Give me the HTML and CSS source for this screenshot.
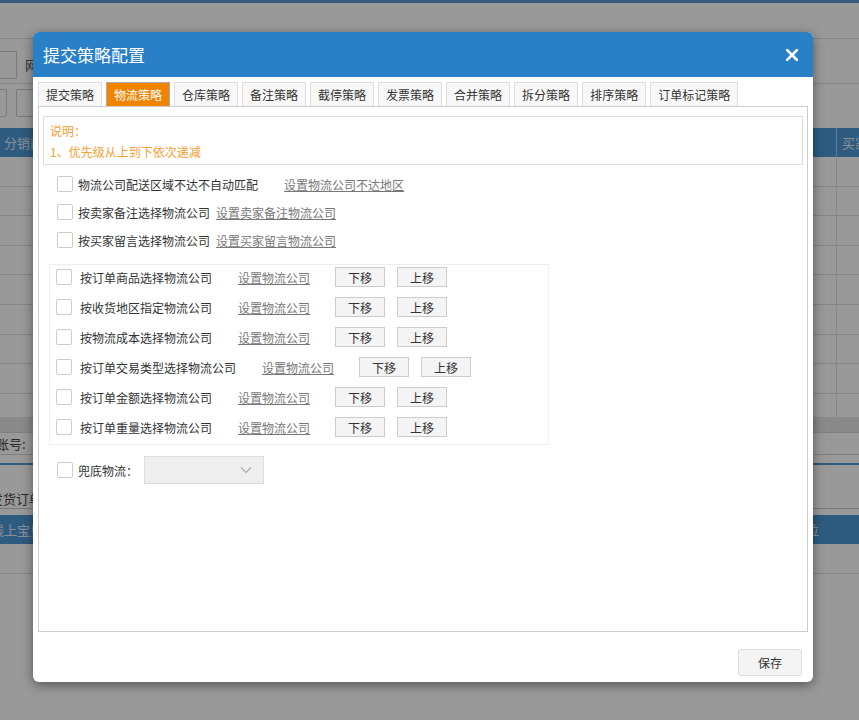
FILE: index.html
```html
<!DOCTYPE html>
<html lang="zh-CN">
<head>
<meta charset="utf-8">
<title>提交策略配置</title>
<link rel="stylesheet" href="styles.css">
</head>
<body>
<div class="page">
  <div class="pg-top"></div>
  <div class="pg-nav"></div>
  <div class="pg-search"><span class="pg-input"></span><span class="pg-label">网店</span></div>
  <div class="pg-tools"><span class="pg-btn"></span><span class="pg-btn pg-btn-icon"></span></div>
  <div class="pg-thead"><span class="pg-th">分销商</span><span class="pg-th-right">买家</span></div>
  <div class="pg-tbody">
    <div class="pg-tr"></div><div class="pg-tr"></div><div class="pg-tr"></div>
    <div class="pg-tr"></div><div class="pg-tr"></div><div class="pg-tr"></div>
    <div class="pg-tr"></div><div class="pg-tr"></div><div class="pg-tr pg-tr-last"></div>
  </div>
  <div class="pg-band"></div>
  <div class="pg-acct">账号:</div>
  <div class="pg-blue-line"></div>
  <div class="pg-orders">发货订单</div>
  <div class="pg-thead2"><span class="pg-th2">线上宝贝名称</span><span class="pg-th2-right">单位</span></div>
  <div class="pg-row4"></div>
</div>
<div class="mask"></div>
<div class="modal">
  <div class="modal-header">
    <span class="modal-title">提交策略配置</span>
    <span class="modal-close"><svg width="12" height="12" viewBox="0 0 12 12"><path d="M1 1L11 11M11 1L1 11" stroke="#fff" stroke-width="2.6" stroke-linecap="square"/></svg></span>
  </div>
  <div class="modal-body">
    <div class="tabs">
      <span class="tab">提交策略</span>
      <span class="tab tab-active">物流策略</span>
      <span class="tab">仓库策略</span>
      <span class="tab">备注策略</span>
      <span class="tab">截停策略</span>
      <span class="tab">发票策略</span>
      <span class="tab">合并策略</span>
      <span class="tab">拆分策略</span>
      <span class="tab">排序策略</span>
      <span class="tab">订单标记策略</span>
    </div>
    <div class="panel">
      <div class="note">
        <div>说明：</div>
        <div>1、优先级从上到下依次递减</div>
      </div>
      <div class="opt"><input type="checkbox" class="cb"><span class="opt-label">物流公司配送区域不达不自动匹配</span><a class="link link-far">设置物流公司不达地区</a></div>
      <div class="opt"><input type="checkbox" class="cb"><span class="opt-label">按卖家备注选择物流公司</span><a class="link">设置卖家备注物流公司</a></div>
      <div class="opt"><input type="checkbox" class="cb"><span class="opt-label">按买家留言选择物流公司</span><a class="link">设置买家留言物流公司</a></div>
      <div class="group">
        <div class="grow"><input type="checkbox" class="cb"><span class="grow-label">按订单商品选择物流公司</span><a class="link link-far">设置物流公司</a><button class="mv">下移</button><button class="mv">上移</button></div>
        <div class="grow"><input type="checkbox" class="cb"><span class="grow-label">按收货地区指定物流公司</span><a class="link link-far">设置物流公司</a><button class="mv">下移</button><button class="mv">上移</button></div>
        <div class="grow"><input type="checkbox" class="cb"><span class="grow-label">按物流成本选择物流公司</span><a class="link link-far">设置物流公司</a><button class="mv">下移</button><button class="mv">上移</button></div>
        <div class="grow"><input type="checkbox" class="cb"><span class="grow-label">按订单交易类型选择物流公司</span><a class="link link-far">设置物流公司</a><button class="mv">下移</button><button class="mv">上移</button></div>
        <div class="grow"><input type="checkbox" class="cb"><span class="grow-label">按订单金额选择物流公司</span><a class="link link-far">设置物流公司</a><button class="mv">下移</button><button class="mv">上移</button></div>
        <div class="grow"><input type="checkbox" class="cb"><span class="grow-label">按订单重量选择物流公司</span><a class="link link-far">设置物流公司</a><button class="mv">下移</button><button class="mv">上移</button></div>
      </div>
      <div class="opt opt-fallback"><input type="checkbox" class="cb"><span class="opt-label">兜底物流：</span><span class="select"><svg width="12" height="8" viewBox="0 0 12 8"><path d="M1 1.5L6 6.5L11 1.5" fill="none" stroke="#aaa" stroke-width="1.2"/></svg></span></div>
    </div>
  </div>
  <div class="modal-footer"><button class="btn-save">保存</button></div>
</div>
</body>
</html>
```

FILE: styles.css
```css
* { box-sizing: border-box; }
html, body { margin: 0; padding: 0; }
body {
  width: 859px;
  height: 720px;
  overflow: hidden;
  background: #fff;
  font-family: "Noto Sans CJK SC", "Microsoft YaHei", sans-serif;
  font-size: 12px;
  color: #333;
  position: relative;
}

/* ---------- background page ---------- */
.page { width: 859px; height: 720px; overflow: hidden; font-size: 13px; }
.pg-top { height: 3px; background: #5a96cf; }
.pg-nav { height: 36px; border-bottom: 1px solid #ddd; }
.pg-search { height: 45px; border-bottom: 1px solid #e2e2e2; display: flex; align-items: flex-start; }
.pg-input { margin-top: 12px; margin-left: -10px; width: 27px; height: 28px; border: 1px solid #ccc; }
.pg-label { margin-left: 8px; margin-top: 16px; color: #555; }
.pg-tools { height: 44px; display: flex; align-items: flex-start; gap: 9px; padding-top: 5px; }
.pg-btn { width: 28px; height: 28px; margin-left: -21px; border: 1px solid #ccc; border-radius: 2px; }
.pg-btn-icon { margin-left: 0; width: 40px; }
.pg-thead { height: 29px; background: #4d98d5; display: flex; align-items: center; color: #e6eef6; }
.pg-th { padding-left: 4px; flex: 1; }
.pg-th-right { width: 23px; height: 29px; border-left: 1px solid #bcd; padding-left: 5px; line-height: 29px; overflow: hidden; white-space: nowrap; }
.pg-tbody { height: 260px; }
.pg-tr { height: 29.6px; border-bottom: 1px solid #e0e0e0; background: linear-gradient(to right, transparent 836px, #e0e0e0 836px, #e0e0e0 837px, transparent 837px); }
.pg-tr-last { border-bottom: none; }
.pg-band { height: 16px; background: #e6e6e6; border-bottom: 1px solid #d4d4d4; }
.pg-acct { height: 22px; line-height: 22px; border-bottom: 1px solid #d4d4d4; margin-left: -4px; color: #444; }
.pg-blue-line { height: 2px; background: #4d98d5; margin-top: 8px; }
.pg-orders { height: 44px; line-height: 20px; padding-top: 24px; border-bottom: 1px solid #ccc; margin-left: -10px; color: #444; }
.pg-thead2 { height: 29px; margin-top: 6px; background: #4d98d5; color: #e6eef6; display: flex; align-items: center; }
.pg-th2 { margin-left: -9px; flex: 1; }
.pg-th2-right { width: 66px; }
.pg-row4 { height: 30px; border-bottom: 1px solid #e0e0e0; }

.mask { position: absolute; inset: 0; background: rgba(0, 0, 0, 0.4); }

/* ---------- modal ---------- */
.modal {
  position: absolute;
  left: 33px;
  top: 32px;
  width: 780px;
  height: 650px;
  background: #fff;
  border-radius: 6px;
  overflow: hidden;
  box-shadow: 0 3px 12px rgba(0, 0, 0, 0.45);
  display: flex;
  flex-direction: column;
}
.modal-header {
  height: 45px;
  background: #2a80c6;
  display: flex;
  align-items: center;
  justify-content: space-between;
  padding: 0 15px 0 10px;
}
.modal-title { color: #fff; font-size: 17px; line-height: 22px; }
.modal-close { display: flex; width: 12px; height: 12px; }
.modal-body { padding: 5px 5px 0; }

.tabs { display: flex; gap: 4px; height: 24px; }
.tab {
  height: 24px;
  padding: 0 7px;
  line-height: 23px;
  border: 1px solid #ddd;
  border-bottom: none;
  background: #f8f8f8;
  color: #333;
  white-space: nowrap;
}
.tab-active { background: #f08300; border-color: #aaa; color: #fff; }

.panel {
  height: 526px;
  border: 1px solid #ccc;
  padding: 9px 4px;
}
.note {
  border: 1px solid #ddd;
  padding: 3px 6px 2px;
  color: #f5a030;
  line-height: 21px;
}

.cb {
  -webkit-appearance: none;
  appearance: none;
  margin: 0;
  width: 16px;
  height: 16px;
  border: 1px solid #ccc;
  border-radius: 2px;
  background: #fff;
  flex: none;
}
.opt {
  height: 28px;
  display: flex;
  align-items: center;
  padding-left: 14px;
  white-space: nowrap;
}
.note + .opt { margin-top: 5px; }
.opt-label { margin-left: 5px; }
.link { color: #777; text-decoration: underline; margin-left: 6px; cursor: pointer; }
.link-far { margin-left: 26px; }

.group {
  width: 500px;
  margin: 10px 0 0 6px;
  border: 1px solid #eee;
  padding: 0 0 5px 6px;
  display: flex;
  flex-direction: column;
  gap: 6px;
}
.grow { height: 24px; display: flex; align-items: center; white-space: nowrap; }
.grow-label { margin-left: 8px; }
.mv {
  width: 50px;
  height: 20px;
  padding: 0;
  border: 1px solid #ccc;
  background: #f4f4f4;
  font-family: inherit;
  font-size: 12px;
  color: #333;
  margin-left: 12px;
}
.link + .mv { margin-left: 25px; }

.opt-fallback { margin-top: 11px; }
.select {
  margin-left: 6px;
  width: 120px;
  height: 28px;
  background: #eee;
  border: 1px solid #ddd;
  display: flex;
  align-items: center;
  justify-content: flex-end;
  padding-right: 11px;
}

.modal-footer {
  flex: 1;
  display: flex;
  justify-content: flex-end;
  align-items: flex-start;
  padding: 17px 11px 0 0;
}
.btn-save {
  width: 64px;
  height: 27px;
  border: 1px solid #ddd;
  border-radius: 3px;
  background: #f4f4f4;
  font-family: inherit;
  font-size: 12px;
  color: #333;
  padding: 0;
}
```
